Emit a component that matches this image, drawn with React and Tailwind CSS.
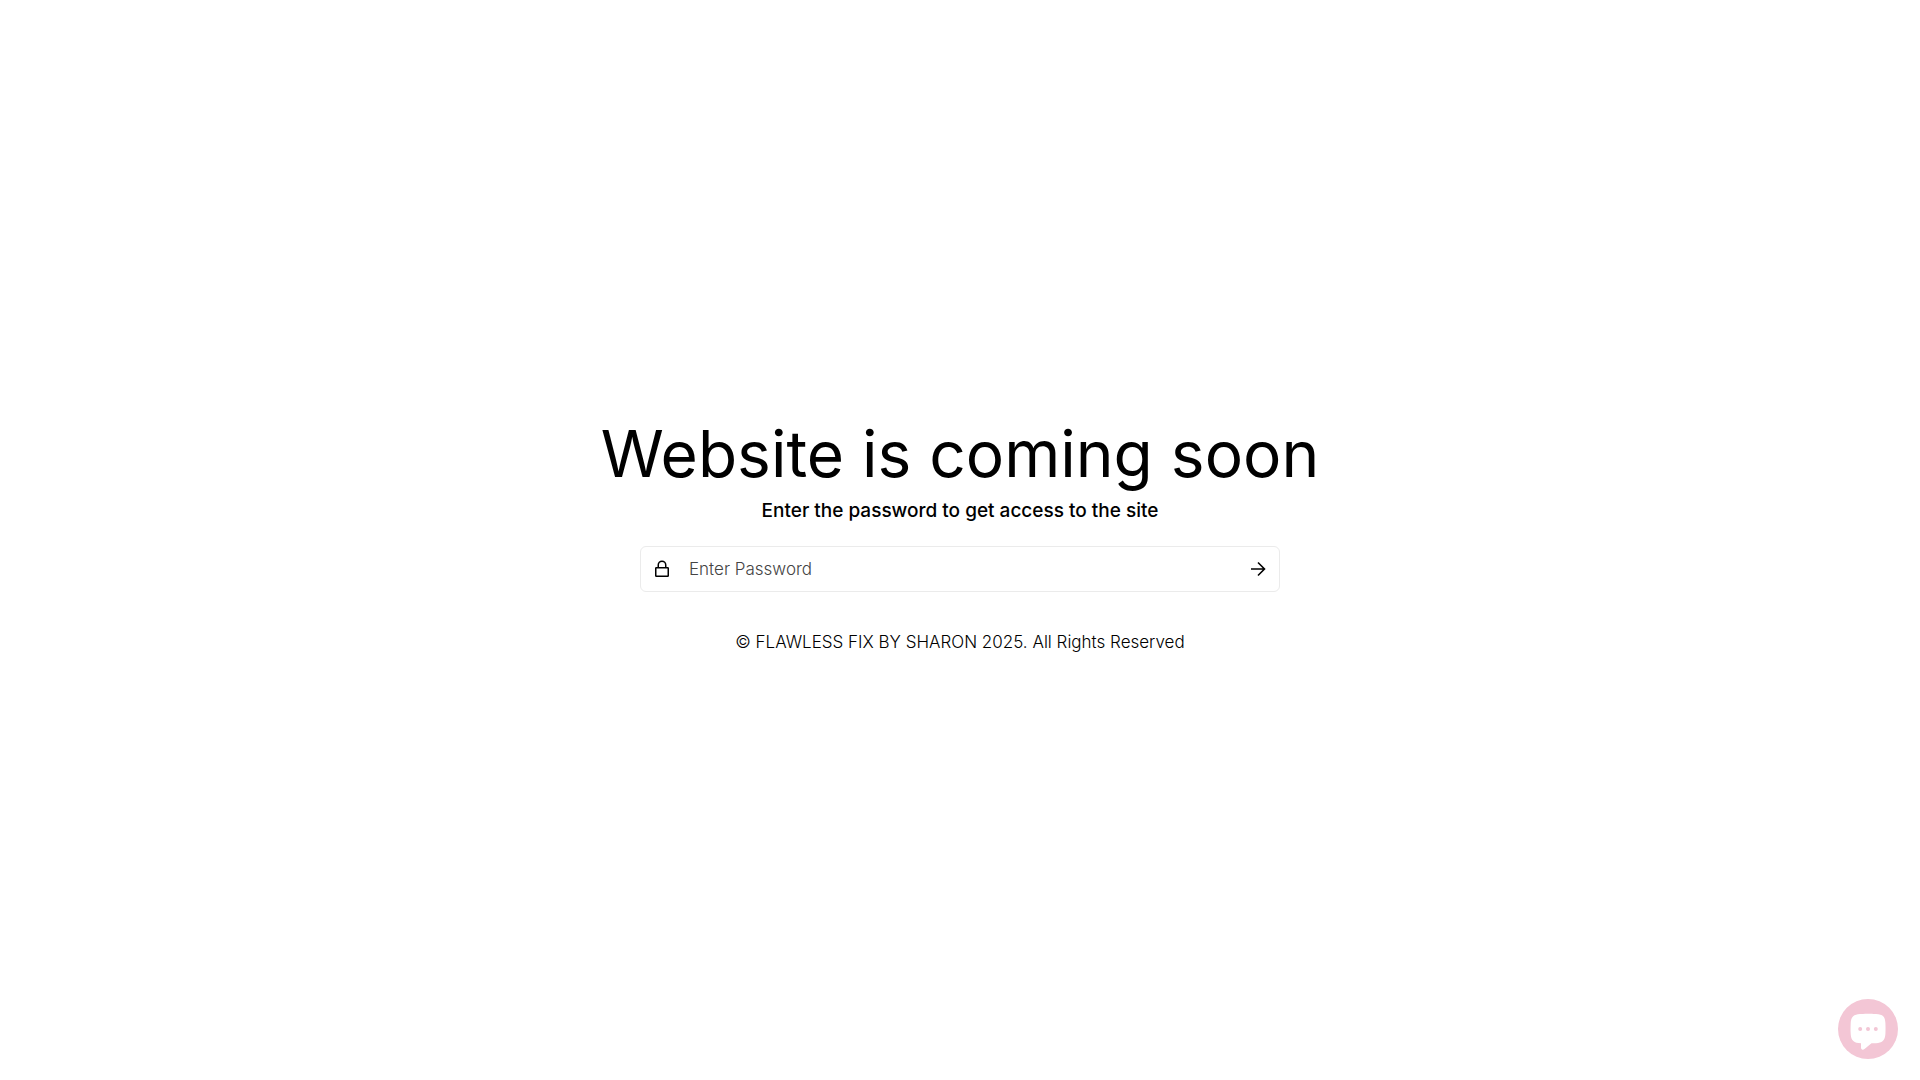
const LockIcon = () => {
  return (
    <svg className="w-5 h-5" viewBox="0 0 20 20" fill="none" stroke="currentColor" strokeWidth="1.5" aria-hidden="true">
      <rect x="3.75" y="8.75" width="12.5" height="8.5" rx="0.6" />
      <path d="M6.25 8.75V6a3.75 3.75 0 0 1 7.5 0v2.75" />
    </svg>
  );
};

const ArrowIcon = () => {
  return (
    <svg className="w-5 h-5" viewBox="0 0 20 20" fill="none" stroke="currentColor" strokeWidth="1.6" aria-hidden="true">
      <path d="M3 10H16.5M10 3.5L16.5 10L10 16.5" />
    </svg>
  );
};

const ChatButton = () => {
  return (
    <button
      type="button"
      aria-label="Open chat"
      className="fixed right-[22px] bottom-[21px] w-[60px] h-[60px] rounded-full bg-[#f3c6d5] cursor-pointer"
    >
      <svg className="w-full h-full" viewBox="0 0 60 60" aria-hidden="true">
        <path
          d="M22 15C31 14.7 31 14.7 38 15C45 15.2 47.2 18 47.4 24C47.6 29 47.6 31 47.4 35C47 41.5 44 44 38 44.2H33.5L26.8 49.7C25 51.3 23 50.8 23 48.8V44.2C16 44.2 13 41.5 12.7 35C12.5 31 12.5 29 12.7 24C13 18 16 15.2 22 15Z"
          fill="#fff"
        />
        <circle cx="22.2" cy="30" r="2" fill="#f3c6d5" />
        <circle cx="30" cy="30" r="2" fill="#f3c6d5" />
        <circle cx="37.8" cy="30" r="2" fill="#f3c6d5" />
      </svg>
    </button>
  );
};

const App = () => {
  return (
    <div className="min-h-screen flex flex-col items-center justify-center bg-white px-4 text-black font-['Inter',sans-serif]">
      <main className="w-full flex flex-col items-center text-center">
        <h1 className="text-[64px] leading-[80px]">Website is coming soon</h1>
        <label htmlFor="password" className="text-[19px] leading-[34px] font-medium">
          Enter the password to get access to the site
        </label>
        <form
          className="mt-[18px] w-full max-w-[640px] h-[46px] flex items-center rounded-md border border-[#ebebeb] px-[11px]"
          onSubmit={(e) => e.preventDefault()}
        >
          <LockIcon />
          <input
            type="password"
            id="password"
            placeholder="Enter Password"
            className="flex-1 min-w-0 pl-[17px] text-[17px] leading-6 font-light focus:outline-none placeholder:text-[#444]"
          />
          <button type="submit" aria-label="Enter" className="cursor-pointer">
            <ArrowIcon />
          </button>
        </form>
      </main>
      <footer className="mt-[38px] mb-3 text-[17px] leading-6 font-light text-center">
        © FLAWLESS FIX BY SHARON 2025. All Rights Reserved
      </footer>
      <ChatButton />
    </div>
  );
};

export default App;
